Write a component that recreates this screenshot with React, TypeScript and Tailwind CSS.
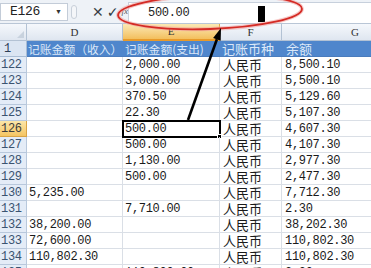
import React from "react";

const mono = "font-['Liberation_Mono',monospace] text-[12px] tracking-[-0.3px]";
const cjk = "font-['Noto_Sans_CJK_SC',sans-serif] text-[13px]";
const cjkHead = "font-['Noto_Sans_CJK_SC',sans-serif] text-[11.8px]";

type Row = { n: number; d: string; e: string; g: string };
const rows: Row[] = [
  { n: 122, d: "", e: "2,000.00", g: "8,500.10" },
  { n: 123, d: "", e: "3,000.00", g: "5,500.10" },
  { n: 124, d: "", e: "370.50", g: "5,129.60" },
  { n: 125, d: "", e: "22.30", g: "5,107.30" },
  { n: 126, d: "", e: "500.00", g: "4,607.30" },
  { n: 127, d: "", e: "500.00", g: "4,107.30" },
  { n: 128, d: "", e: "1,130.00", g: "2,977.30" },
  { n: 129, d: "", e: "500.00", g: "2,477.30" },
  { n: 130, d: "5,235.00", e: "", g: "7,712.30" },
  { n: 131, d: "", e: "7,710.00", g: "2.30" },
  { n: 132, d: "38,200.00", e: "", g: "38,202.30" },
  { n: 133, d: "72,600.00", e: "", g: "110,802.30" },
  { n: 134, d: "110,802.30", e: "", g: "110,802.30" },
  { n: 135, d: "", e: "110,800.00", g: "2.30" },
];

const cell = "h-[16px] leading-[16px] border-b border-r border-[#dadfe6] pl-[2px] whitespace-nowrap text-[#1a1a1a]";

export default function App() {
  return (
    <div className="relative w-[371px] h-[268px] overflow-hidden bg-white">
      {/* formula bar */}
      <div className="h-[24px] flex items-stretch bg-[#eef2f7] border-b border-[#b9c6d6]">
        <div className="w-[68px] mt-[3px] mb-[2px] bg-white border border-[#c3ccd8] flex items-center justify-between pl-[9px] pr-[5px]">
          <span className={`${mono} text-[13px] text-[#222]`}>E126</span>
          <span className="text-[7px] text-[#333]">▼</span>
        </div>
        <div className="flex items-center w-[60px] pl-[3px]">
          <span className="w-[10px] h-[14px] rounded-full border border-[#c8d0da] bg-[#f4f6f9] mr-[15px]"></span>
          <span className="text-[14px] font-bold text-[#3a3f46] font-['DejaVu_Sans',sans-serif] mr-[3px] leading-none">✕</span>
          <span className="text-[14px] font-bold text-[#2f3a44] font-['DejaVu_Sans',sans-serif] mr-[3px] leading-none">✓</span>
          <span className="text-[9px] italic text-[#555] font-['Liberation_Serif',serif]">fx</span>
        </div>
        <div className="flex-1 flex items-center bg-white border-l border-t border-[#c7d0dc] mt-[2px] pl-[19px]">
          <span className={`${mono} text-[#222]`}>500.00</span>
        </div>
      </div>

      {/* sheet grid */}
      <div className="grid grid-cols-[27px_96px_97px_62px_89px]">
        {/* column headers */}
        <div className="h-[17px] bg-gradient-to-b from-[#f5f8fc] to-[#dfe6f0] border-r border-b border-[#b3c2d4] relative">
          <div className="absolute right-[2px] bottom-[2px] w-0 h-0 border-l-[7px] border-l-transparent border-b-[7px] border-b-[#c8d2de]"></div>
        </div>
        <div className="h-[17px] bg-gradient-to-b from-[#f5f8fc] to-[#dfe6f0] border-r border-b border-[#b3c2d4] flex items-center justify-center text-[11px] text-[#333] font-['Liberation_Serif',serif]">D</div>
        <div className="h-[17px] bg-gradient-to-b from-[#fbe9b4] to-[#f3bf5c] border-r border-b-2 border-[#e0a94a] border-b-[#e89a2a] flex items-center justify-center text-[11px] text-[#333] font-['Liberation_Serif',serif]">E</div>
        <div className="h-[17px] bg-gradient-to-b from-[#f5f8fc] to-[#dfe6f0] border-r border-b border-[#b3c2d4] flex items-center justify-center text-[11px] text-[#333] font-['Liberation_Serif',serif]">F</div>
        <div className="h-[17px] bg-gradient-to-b from-[#f5f8fc] to-[#dfe6f0] border-b border-[#b3c2d4] flex items-center justify-end pr-[12px] text-[11px] text-[#333] font-['Liberation_Serif',serif]">G</div>

        {/* row 1 */}
        <div className={`h-[16px] leading-[16px] bg-[#dbe5f2] border-r border-b border-[#a9bdd4] pl-[4px] ${mono} text-[#2c3e55]`}>1</div>
        <div className={`h-[16px] leading-[16px] bg-[#4f86cc] border-b border-[#4a7cbd] pl-[1px] overflow-hidden whitespace-nowrap ${cjkHead} text-[#dbe8f8]`}>记账金额（收入）</div>
        <div className={`h-[16px] leading-[16px] bg-[#4f86cc] border-b border-[#4a7cbd] pl-[2px] overflow-hidden whitespace-nowrap ${cjkHead} text-[#dbe8f8]`}>记账金额(支出)</div>
        <div className={`h-[16px] leading-[16px] bg-[#4f86cc] border-b border-[#4a7cbd] pl-[2px] whitespace-nowrap ${cjk} text-[#dbe8f8]`}>记账币种</div>
        <div className={`h-[16px] leading-[16px] bg-[#4f86cc] border-b border-[#4a7cbd] pl-[4px] whitespace-nowrap ${cjk} text-[#dbe8f8]`}>余额</div>

        {rows.map((r) => {
          const sel = r.n === 126;
          return (
            <React.Fragment key={r.n}>
              <div
                className={`h-[16px] leading-[16px] border-r border-b pl-[1px] ${mono} ${
                  sel
                    ? "bg-gradient-to-b from-[#fce6a8] to-[#f5c562] border-[#d9a445] text-[#3b3b3b]"
                    : "bg-[#e4ecf7] border-[#b8c8dc] text-[#3a5370]"
                }`}
              >
                {r.n}
              </div>
              <div className={`${cell} ${mono}`}>{r.d}</div>
              <div
                className={`${cell} ${mono} relative ${
                  sel ? "outline-2 outline-black -outline-offset-1" : ""
                }`}
              >
                {r.e}
                {sel && (
                  <span className="absolute right-[-3px] bottom-[-3px] w-[5px] h-[5px] bg-black border border-white"></span>
                )}
              </div>
              <div className={`${cell} ${cjk} pl-[3px]`}>人民币</div>
              <div className={`${cell} ${mono} pl-[3px] border-r-0`}>{r.g}</div>
            </React.Fragment>
          );
        })}
      </div>

      {/* annotation overlay */}
      <svg className="absolute left-0 top-0 pointer-events-none" width="371" height="268" viewBox="0 0 371 268">
        <rect x="258" y="6" width="7" height="16" fill="#000" />
        <g transform="rotate(-2 210 12)">
          <ellipse cx="210" cy="12" rx="92" ry="17" fill="none" stroke="#f2a7a3" strokeWidth="4" opacity="0.6" />
          <ellipse cx="210" cy="12" rx="92" ry="17" fill="none" stroke="#d42b25" strokeWidth="1.8" />
        </g>
        <line x1="188" y1="120" x2="216.9" y2="39.3" stroke="#000" strokeWidth="2.6" />
        <polygon points="221,28 220.7,40.7 213.1,37.9" fill="#000" />
      </svg>
    </div>
  );
}
